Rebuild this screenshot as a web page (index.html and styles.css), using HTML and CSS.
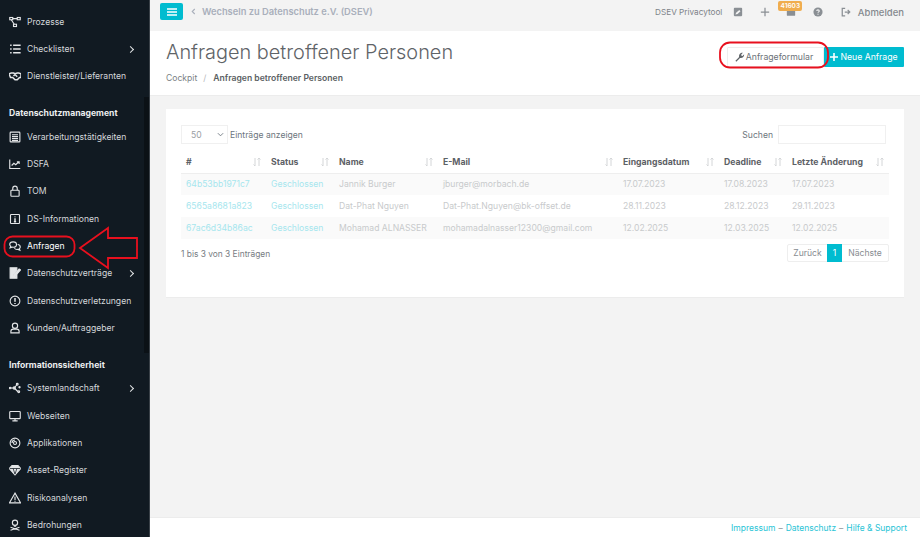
FILE: index.html
```html
<!DOCTYPE html>
<html lang="de">
<head>
  <meta charset="UTF-8" />
  <title>Anfragen betroffener Personen</title>
  <link rel="stylesheet" href="styles.css">
</head>
<body>
  <aside class="sidebar">
    <a class="nav-item"><svg class="nav-icon" viewBox="0 0 16 16"><rect x="1" y="2" width="4" height="3"/><rect x="11" y="2" width="4" height="3"/><rect x="6" y="11" width="4" height="3"/><path d="M5 3.500h6M3 5l4 6"/></svg>Prozesse</a>
    <a class="nav-item has-sub"><svg class="nav-icon" viewBox="0 0 16 16"><path class="thick" d="M1.500 3h2M1.500 8h2M1.500 13h2M5.500 3h10M5.500 8h10M5.500 13h10"/></svg>Checklisten</a>
    <a class="nav-item"><svg class="nav-icon" viewBox="0 0 16 16"><path class="thick" d="M0 5l3-1 3 0 2 1 3-1 2 0 3 1v5l-2 0-3 3-3 0-3-3-3 0zM6 8l2-2 3 3"/></svg>Dienstleister/Lieferanten</a>

    <div class="nav-heading">Datenschutzmanagement</div>
    <a class="nav-item"><svg class="nav-icon" viewBox="0 0 16 16"><rect x="1.500" y="1.500" width="13" height="13" rx="1"/><path d="M4 5h8M4 7.500h8M4 10h8M4 12.500h8"/></svg>Verarbeitungstätigkeiten</a>
    <a class="nav-item"><svg class="nav-icon" viewBox="0 0 16 16"><path d="M1 2v12h14M3.500 10l3-3 2.500 2 4-4M10.500 5h3v3"/></svg>DSFA</a>
    <a class="nav-item"><svg class="nav-icon" viewBox="0 0 16 16"><rect x="2.500" y="7" width="11" height="8" rx="1"/><path d="M5 7V4.500a3 3 0 0 1 6 0V7"/></svg>TOM</a>
    <a class="nav-item"><svg class="nav-icon" viewBox="0 0 16 16"><rect x="2" y="2" width="12" height="12" rx="1"/><path class="thick" d="M8 4.500v1M8 7v4.500M6.500 11.500h3"/></svg>DS-Informationen</a>
    <a class="nav-item is-active"><svg class="nav-icon" viewBox="0 0 16 16"><path d="M5.500 2.500c-2.500 0-4.500 1.500-4.500 3.500 0 1 .5 1.800 1.300 2.400L1.500 10.500l2.500-1c.5.100 1 .2 1.500.2 2.500 0 4.500-1.600 4.500-3.700s-2-3.500-4.500-3.500z"/><path d="M11.500 6c2 .3 3.500 1.600 3.500 3.200 0 1-.5 1.800-1.300 2.300l.8 2-2.500-1c-1.800.4-3.800-.2-4.800-1.500"/></svg>Anfragen</a>
    <a class="nav-item has-sub"><svg class="nav-icon" viewBox="0 0 16 16"><path class="solid" d="M1.500 1h9v3.500L6.500 9.500 6 13l3.500-1 1-1v4h-9z"/><path class="thick" d="M15 4l-6 7-2 1 .5-2 6-7z"/></svg>Datenschutzverträge</a>
    <a class="nav-item"><svg class="nav-icon" viewBox="0 0 16 16"><circle cx="8" cy="8" r="6.500"/><path class="thick" d="M8 4v5M8 10.500v1.500"/></svg>Datenschutzverletzungen</a>
    <a class="nav-item"><svg class="nav-icon" viewBox="0 0 16 16"><circle cx="8" cy="5" r="3.500"/><path d="M2.500 14.500v-2c0-1.500 1.500-3 3-3h5c1.500 0 3 1.500 3 3v2z"/></svg>Kunden/Auftraggeber</a>

    <div class="nav-heading">Informationssicherheit</div>
    <a class="nav-item has-sub"><svg class="nav-icon" viewBox="0 0 16 16"><path d="M2 8h5M7 8l4-5M7 8l5 5"/><circle cx="1.500" cy="8" r="1"/><circle cx="7" cy="8" r="1.500"/><circle cx="11" cy="3" r="1.200"/><circle cx="13" cy="13" r="1.200"/><circle cx="14" cy="7" r=".8"/></svg>Systemlandschaft</a>
    <a class="nav-item"><svg class="nav-icon" viewBox="0 0 16 16"><rect x="1" y="2" width="14" height="9.500" rx="1"/><path d="M8 11.500V14M4.500 14.500h7"/></svg>Webseiten</a>
    <a class="nav-item"><svg class="nav-icon" viewBox="0 0 16 16"><circle cx="8" cy="8" r="6.500"/><circle cx="8" cy="8" r="2"/><path d="M4 8a4 4 0 0 1 4-4"/></svg>Applikationen</a>
    <a class="nav-item"><svg class="nav-icon" viewBox="0 0 16 16"><path class="solid" d="M4 2h8l3.500 4L8 14.500.5 6z"/><path class="facet" d="M1 6h14M5.500 6L8 13.500 10.500 6"/></svg>Asset-Register</a>
    <a class="nav-item"><svg class="nav-icon" viewBox="0 0 16 16"><path d="M8 1.500L15.500 14.500H.5z"/><path d="M8 6v4.500M8 11.500v1.500"/></svg>Risikoanalysen</a>
    <a class="nav-item"><svg class="nav-icon" viewBox="0 0 16 16"><circle cx="8" cy="5" r="3.500"/><path d="M6.500 9.500h3M2 11l12 4M14 11L2 15"/></svg>Bedrohungen</a>
  </aside>

  <div class="main">
    <header class="topbar">
      <button class="menu-btn"><svg viewBox="0 0 10 8" width="10" height="8"><path d="M0 1h10M0 4h10M0 7h10"/></svg></button>
      <svg class="back-icon" viewBox="0 0 6 8" width="5" height="7"><path d="M4.500 1L1.500 4l3 3"/></svg>
      <span class="switch-link">Wechseln zu Datenschutz e.V. (DSEV)</span>
      <div class="topbar-right">
        <span class="tool-name">DSEV Privacytool</span>
        <svg class="top-icon" viewBox="0 0 12 12"><path class="solid" fill-rule="evenodd" d="M2 1h8a1 1 0 0 1 1 1v8a1 1 0 0 1-1 1H2a1 1 0 0 1-1-1V2a1 1 0 0 1 1-1zM3 9l2.500-.6L9 5 7.500 3.500 3.700 7z"/></svg>
        <svg class="top-icon" viewBox="0 0 12 12"><path class="plus" d="M6 1v10M1 6h10"/></svg>
        <span class="mail-wrap">
          <svg class="top-icon" viewBox="0 0 12 12"><rect class="solid" x="1" y="2" width="10" height="8.500" rx="1"/></svg>
          <span class="badge">41603</span>
        </span>
        <svg class="top-icon" viewBox="0 0 12 12"><circle class="solid" cx="6" cy="6" r="5.500"/><path class="q-mark" d="M4.500 4.800C4.500 3 7.500 3 7.500 4.800 7.500 6 6 5.800 6 7M6 8.200v1"/></svg>
        <span class="logout"><svg class="top-icon" viewBox="0 0 12 12"><path class="plain" d="M5 1.500H1.500v9H5M4.500 6h6M8 3.500L10.500 6 8 8.500"/></svg>Abmelden</span>
      </div>
    </header>

    <section class="page-head">
      <div>
        <h1>Anfragen betroffener Personen</h1>
        <div class="crumbs"><span>Cockpit</span><span class="crumb-sep">/</span><b>Anfragen betroffener Personen</b></div>
      </div>
      <div class="head-actions">
        <a class="btn btn-white"><svg viewBox="0 0 12 12" width="10" height="10"><path d="M.5 10.500L5 6C4.300 3.500 6.300.8 9.500 1L7.500 3l.2 1.500L9 4.800l2-2c.3 3-2.400 5-5 4.300l-4.500 4.500z"/></svg>Anfrageformular</a>
        <a class="btn btn-cyan"><svg viewBox="0 0 10 10" width="8" height="8"><path d="M5 0v10M0 5h10"/></svg>Neue Anfrage</a>
      </div>
    </section>

    <main class="content">
      <div class="card">
        <div class="table-tools">
          <div class="length">
            <span class="select-box">50<svg viewBox="0 0 8 5" width="7" height="5"><path d="M1 1l3 3 3-3"/></svg></span>
            Einträge anzeigen
          </div>
          <div class="search">Suchen <span class="search-box"></span></div>
        </div>

        <table class="data-table">
          <thead>
            <tr>
              <th class="col-id"><span class="th-in">#<svg class="sort" viewBox="0 0 8 8"><path d="M2 0v8M.5 6.500L2 8M6 8V0M4.500 1.500L6 0l1.500 1.500"/></svg></span></th>
              <th class="col-status"><span class="th-in">Status<svg class="sort" viewBox="0 0 8 8"><path d="M2 0v8M.5 6.500L2 8M6 8V0M4.500 1.500L6 0l1.500 1.500"/></svg></span></th>
              <th class="col-name"><span class="th-in">Name<svg class="sort" viewBox="0 0 8 8"><path d="M2 0v8M.5 6.500L2 8M6 8V0M4.500 1.500L6 0l1.500 1.500"/></svg></span></th>
              <th class="col-mail"><span class="th-in">E-Mail<svg class="sort" viewBox="0 0 8 8"><path d="M2 0v8M.5 6.500L2 8M6 8V0M4.500 1.500L6 0l1.500 1.500"/></svg></span></th>
              <th class="col-in"><span class="th-in">Eingangsdatum<svg class="sort" viewBox="0 0 8 8"><path d="M2 0v8M.5 6.500L2 8M6 8V0M4.500 1.500L6 0l1.500 1.500"/></svg></span></th>
              <th class="col-dead"><span class="th-in">Deadline<svg class="sort" viewBox="0 0 8 8"><path d="M2 0v8M.5 6.500L2 8M6 8V0M4.500 1.500L6 0l1.500 1.500"/></svg></span></th>
              <th class="col-last"><span class="th-in">Letzte Änderung<svg class="sort" viewBox="0 0 8 8"><path d="M2 0v8M.5 6.500L2 8M6 8V0M4.500 1.500L6 0l1.500 1.500"/></svg></span></th>
            </tr>
          </thead>
          <tbody>
            <tr><td class="link">64b53bb1971c7</td><td class="link">Geschlossen</td><td>Jannik Burger</td><td>jburger@morbach.de</td><td>17.07.2023</td><td>17.08.2023</td><td>17.07.2023</td></tr>
            <tr><td class="link">6565a8681a823</td><td class="link">Geschlossen</td><td>Dat-Phat Nguyen</td><td>Dat-Phat.Nguyen@bk-offset.de</td><td>28.11.2023</td><td>28.12.2023</td><td>29.11.2023</td></tr>
            <tr><td class="link">67ac6d34b86ac</td><td class="link">Geschlossen</td><td>Mohamad ALNASSER</td><td>mohamadalnasser12300@gmail.com</td><td>12.02.2025</td><td>12.03.2025</td><td>12.02.2025</td></tr>
          </tbody>
        </table>

        <div class="table-foot">
          <span class="info">1 bis 3 von 3 Einträgen</span>
          <div class="pager"><a class="prev">Zurück</a><a class="current">1</a><a>Nächste</a></div>
        </div>
      </div>
    </main>

    <footer class="foot">
      <a>Impressum</a><span class="dash">–</span><a>Datenschutz</a><span class="dash">–</span><a>Hilfe &amp; Support</a>
    </footer>
  </div>

  <!-- red markup drawn over the screenshot -->
  <svg class="markup" viewBox="0 0 920 537" width="920" height="537">
    <rect x="4.500" y="236.500" width="70" height="20" rx="8"/>
    <path d="M80 248L108 228V238H137V258H108V268z"/>
    <rect x="720" y="42.500" width="108" height="25" rx="10"/>
  </svg>
</body>
</html>
```

FILE: styles.css
```css
* {
  box-sizing: border-box;
}

html, body {
  height: 100%;
}

body {
  margin: 0;
  display: flex;
  height: 537px;
  overflow: hidden;
  font-family: "Inter", "Liberation Sans", sans-serif;
  font-size: 9px;
  color: #6c757d;
  background: #f3f3f3;
}

a {
  color: inherit;
  text-decoration: none;
}

/* sidebar */
.sidebar {
  position: relative;
  width: 150px;
  flex: none;
  height: 537px;
  padding-top: 8px;
  overflow: hidden;
  background: #111a22;
  border-right: 1px solid #3a4148;
  color: #d5d8db;
}

/* scrollbar thumb */
.sidebar::after {
  content: "";
  position: absolute;
  left: 144px;
  top: 97px;
  width: 5px;
  height: 256px;
  background: #0b1116;
}

.nav-item {
  position: relative;
  display: flex;
  align-items: center;
  gap: 6px;
  height: 27.350px;
  padding-left: 9px;
  font-size: 8.600px;
  white-space: nowrap;
}

.nav-item.is-active {
  color: #fff;
}

.has-sub::after {
  content: "";
  position: absolute;
  left: 128px;
  top: 11.500px;
  width: 4px;
  height: 4px;
  border-top: 1.200px solid #e2e4e6;
  border-right: 1.200px solid #e2e4e6;
  transform: rotate(45deg);
}

.nav-icon {
  width: 12px;
  height: 12px;
  flex: none;
  fill: none;
  stroke: #e4e6e8;
  stroke-width: 1.500;
}

.nav-icon .thick {
  stroke-width: 2;
}

.nav-icon .solid {
  fill: #e4e6e8;
}

.nav-icon .facet {
  stroke: #111a22;
  stroke-width: 1;
}

.nav-heading {
  height: 19px;
  margin-top: 14px;
  padding-left: 9px;
  line-height: 18px;
  font-size: 8.600px;
  font-weight: 700;
  color: #eceeef;
  white-space: nowrap;
}

/* main column */
.main {
  flex: 1;
  min-width: 0;
  display: flex;
  flex-direction: column;
}

.topbar {
  height: 31px;
  flex: none;
  display: flex;
  align-items: flex-start;
  padding: 3px 16px 0 10px;
}

.menu-btn {
  width: 23px;
  height: 17px;
  display: flex;
  align-items: center;
  justify-content: center;
  padding: 0;
  border: 0;
  border-radius: 2px;
  background: #00bcd0;
}

.menu-btn path {
  stroke: #fff;
  stroke-width: 1.300;
}

.back-icon {
  margin: 5px 6px 0 8px;
  fill: none;
  stroke: #a9afbb;
  stroke-width: 1.300;
}

.switch-link {
  line-height: 18px;
  font-size: 9.300px;
  font-weight: 600;
  color: #a9afbb;
}

.topbar-right {
  margin-left: auto;
  display: flex;
  align-items: center;
  height: 18px;
  color: #7d8288;
}

.tool-name {
  font-size: 8.200px;
  margin-right: 11px;
}

.top-icon {
  width: 10px;
  height: 10px;
  flex: none;
  margin-right: 16.500px;
  fill: #8a8f94;
  stroke: none;
}

.top-icon .plus, .top-icon .plain {
  fill: none;
  stroke: #8a8f94;
  stroke-width: 1.500;
}

.top-icon .q-mark {
  fill: none;
  stroke: #f3f3f3;
  stroke-width: 1.300;
}

.mail-wrap {
  position: relative;
  display: flex;
}

.badge {
  position: absolute;
  left: -8px;
  top: -6px;
  width: 24px;
  height: 10px;
  border-radius: 2px;
  background: #f0ad4e;
  color: #fff;
  font-size: 6.500px;
  font-weight: 600;
  line-height: 10px;
  text-align: center;
}

.logout {
  display: flex;
  align-items: center;
  margin-left: 1.500px;
  font-size: 9.500px;
  font-weight: 500;
  color: #85898e;
}

.logout .top-icon {
  margin-right: 7px;
}

.page-head {
  height: 65px;
  flex: none;
  display: flex;
  justify-content: space-between;
  padding: 9px 16px 0 16px;
  background: #fff;
  border-bottom: 1px solid #ececec;
}

h1 {
  margin: 0;
  font-size: 19.900px;
  line-height: 24px;
  font-weight: 300;
  color: #5f6468;
}

.crumbs {
  margin-top: 9px;
  font-size: 8.600px;
  color: #7a7f85;
}

.crumb-sep {
  margin: 0 7px 0 6px;
  color: #b5b8bb;
}

.crumbs b {
  font-weight: 600;
  color: #5b5f64;
}

.head-actions {
  display: flex;
  align-items: flex-start;
  padding-top: 7px;
}

.btn {
  display: flex;
  align-items: center;
  justify-content: center;
  gap: 1px;
  height: 20px;
  padding-bottom: 1px;
  font-size: 8.700px;
  border-radius: 1px;
}

.btn-white {
  width: 97px;
  padding-right: 3px;
  border: 1px solid #eeeeee;
  color: #6c7278;
  background: #fff;
}

.btn-white svg {
  fill: #5f6468;
}

.btn-cyan {
  width: 80px;
  background: #00bcd0;
  color: #fff;
}

.btn-cyan svg {
  margin-right: 1px;
  stroke: #fff;
  stroke-width: 2;
}

.content {
  flex: 1;
  padding: 13px 16px;
}

.card {
  height: 189px;
  padding: 16px 15px 0;
  background: #fff;
  border-bottom: 1px solid #ececec;
}

.table-tools {
  display: flex;
  justify-content: space-between;
  align-items: center;
  padding-right: 3px;
  font-size: 8.600px;
}

.length {
  display: flex;
  align-items: center;
  gap: 2px;
}

.select-box {
  width: 47px;
  height: 19px;
  display: flex;
  align-items: center;
  justify-content: space-between;
  padding: 0 3px 0 9px;
  border: 1px solid #f0f0f0;
  color: #9a9ea3;
}

.select-box svg {
  fill: none;
  stroke: #6c757d;
}

.search {
  display: flex;
  align-items: center;
  gap: 5px;
}

.search-box {
  width: 108px;
  height: 19px;
  border: 1px solid #f0f0f0;
}

.data-table {
  width: 708px;
  margin-top: 7px;
  border-collapse: collapse;
  table-layout: fixed;
}

.col-id { width: 85px; }
.col-status { width: 68px; }
.col-name { width: 104px; }
.col-mail { width: 180px; }
.col-in { width: 101px; }
.col-dead { width: 68px; }
.col-last { width: 102px; }

.data-table th {
  height: 22px;
  padding: 0 5px;
  text-align: left;
  font-size: 8.700px;
  font-weight: 700;
  color: #5d6166;
  border-bottom: 1px solid #eeeeee;
}

.th-in {
  display: flex;
  align-items: center;
  justify-content: space-between;
  white-space: nowrap;
}

.sort {
  width: 8px;
  height: 8px;
  flex: none;
  fill: none;
  stroke: #d4d6d8;
  stroke-width: 1;
}

.data-table td {
  height: 22px;
  padding: 0 5px;
  font-size: 8.600px;
  color: #c8cacc;
  white-space: nowrap;
}

.data-table tbody tr:nth-child(odd) {
  background: #fafafa;
}

.data-table td.link {
  color: #a6e6ee;
}

.table-foot {
  display: flex;
  justify-content: space-between;
  align-items: center;
  margin-top: 5px;
}

.info {
  padding-top: 1px;
  font-size: 8.400px;
  color: #777c82;
}

.pager {
  display: flex;
  height: 18px;
  width: 102px;
  border: 1px solid #eeeeee;
  border-radius: 2px;
  font-size: 8.600px;
  line-height: 16px;
  color: #888c91;
}

.pager a {
  flex: 1;
  text-align: center;
}

.pager a.prev {
  flex: none;
  width: 39px;
}

.pager a.current {
  flex: none;
  width: 15px;
  margin: -1px 0;
  line-height: 18px;
  background: #00bcd0;
  color: #fff;
}

.foot {
  height: 20px;
  flex: none;
  display: flex;
  justify-content: flex-end;
  align-items: center;
  gap: 3px;
  padding-right: 13px;
  background: #fff;
  border-top: 1px solid #ececec;
  font-size: 8.500px;
  color: #2ac4d6;
}

.dash {
  color: #8a8f94;
}

.markup {
  position: absolute;
  left: 0;
  top: 0;
  pointer-events: none;
  fill: none;
  stroke: #e8101e;
  stroke-width: 1.800;
}
```
